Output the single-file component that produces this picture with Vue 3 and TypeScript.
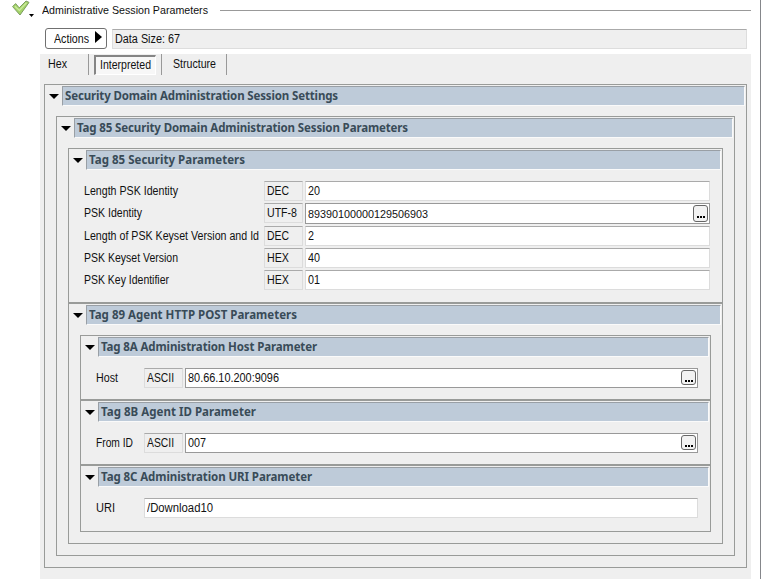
<script setup lang="ts">
import type { Directive } from 'vue'

interface Row {
  label: string
  labelWidth: number
  type: string
  typeWidth: number
  value: string
  valueWidth: number
  more?: boolean
}

interface Section {
  title: string
  titleWidth: number
  rows: Row[]
}

// Condenses a caption horizontally to its design width.
const vFit: Directive<HTMLElement, number> = {
  mounted: (el, binding) => {
    const natural = el.getBoundingClientRect().width
    if (!natural) return
    el.style.transform = `scaleX(${binding.value / natural})`
    el.style.marginRight = `${binding.value - natural}px`
  },
}

// Adjusts tracking so a heading takes up its design width.
const vTrack: Directive<HTMLElement, number> = {
  mounted: (el, binding) => {
    const natural = el.getBoundingClientRect().width
    const count = (el.textContent ?? '').length
    if (count) el.style.letterSpacing = `${(binding.value - natural) / count}px`
  },
}

const security: Row[] = [
  { label: 'Length PSK Identity', labelWidth: 94, type: 'DEC', typeWidth: 22, value: '20', valueWidth: 12 },
  { label: 'PSK Identity', labelWidth: 58, type: 'UTF-8', typeWidth: 30, value: '89390100000129506903', valueWidth: 120, more: true },
  { label: 'Length of PSK Keyset Version and Id', labelWidth: 175, type: 'DEC', typeWidth: 22, value: '2', valueWidth: 6 },
  { label: 'PSK Keyset Version', labelWidth: 94, type: 'HEX', typeWidth: 22, value: '40', valueWidth: 12 },
  { label: 'PSK Key Identifier', labelWidth: 85, type: 'HEX', typeWidth: 22, value: '01', valueWidth: 12 },
]

const agent: Section[] = [
  {
    title: 'Tag 8A Administration Host Parameter',
    titleWidth: 216,
    rows: [{ label: 'Host', labelWidth: 22, type: 'ASCII', typeWidth: 27, value: '80.66.10.200:9096', valueWidth: 91, more: true }],
  },
  {
    title: 'Tag 8B Agent ID Parameter',
    titleWidth: 155,
    rows: [{ label: 'From ID', labelWidth: 37, type: 'ASCII', typeWidth: 27, value: '007', valueWidth: 18, more: true }],
  },
  {
    title: 'Tag 8C Administration URI Parameter',
    titleWidth: 211,
    rows: [{ label: 'URI', labelWidth: 19, type: '', typeWidth: 0, value: '/Download10', valueWidth: 66 }],
  },
]
</script>

<template>
  <div class="window">
    <header class="heading">
      <svg class="check" width="24" height="18" viewBox="0 0 24 18">
        <path d="M.6 6.6 L3.6 3.6 L7.2 7.8 L14 1 L17 2.4 L8 15 Z" fill="#a5d468" stroke="#7c9c62" stroke-width="1" stroke-linejoin="round" />
        <path d="M3 6.2 L7.4 10.4 L14.4 2.8" fill="none" stroke="#cdeca2" stroke-width="1.2" />
        <path d="M17 14h5l-2.5 3z" fill="#000" />
      </svg>
      <span v-fit="166" class="text">Administrative Session Parameters</span>
      <i class="rule"></i>
    </header>

    <div class="toolbar">
      <button class="actions">
        <span v-fit="35" class="text">Actions</span>
        <svg width="7" height="12" viewBox="0 0 7 12"><path d="M0 0 L7 6 L0 12Z" /></svg>
      </button>
      <div class="status"><span v-fit="65" class="text">Data Size: 67</span></div>
    </div>

    <main class="panel">
      <nav class="tabs">
        <div class="tab hex"><span v-fit="19" class="text">Hex</span></div>
        <div class="tab active"><div class="pressed"><span v-fit="51" class="text">Interpreted</span></div></div>
        <div class="tab structure"><span v-fit="43" class="text">Structure</span></div>
      </nav>

      <section class="box root">
        <div class="bar">
          <svg class="arrow" width="10" height="5" viewBox="0 0 10 5"><path d="M0 0h10L5 5z" /></svg>
          <h2><span v-track="273">Security Domain Administration Session Settings</span></h2>
        </div>
        <section class="box">
          <div class="bar">
            <svg class="arrow" width="10" height="5" viewBox="0 0 10 5"><path d="M0 0h10L5 5z" /></svg>
            <h2><span v-track="331">Tag 85 Security Domain Administration Session Parameters</span></h2>
          </div>
          <section class="box">
            <div class="bar">
              <svg class="arrow" width="10" height="5" viewBox="0 0 10 5"><path d="M0 0h10L5 5z" /></svg>
              <h2><span v-track="156">Tag 85 Security Parameters</span></h2>
            </div>
            <div class="rows wide">
              <div v-for="row in security" :key="row.label" class="row" :class="{ editable: row.more }">
                <label><span v-fit="row.labelWidth" class="text">{{ row.label }}</span></label>
                <div class="type"><span v-fit="row.typeWidth" class="text">{{ row.type }}</span></div>
                <div class="value">
                  <span v-fit="row.valueWidth" class="text">{{ row.value }}</span>
                  <button v-if="row.more" class="more"><i></i><i></i><i></i></button>
                </div>
              </div>
            </div>
          </section>
          <section class="box">
            <div class="bar">
              <svg class="arrow" width="10" height="5" viewBox="0 0 10 5"><path d="M0 0h10L5 5z" /></svg>
              <h2><span v-track="208">Tag 89 Agent HTTP POST Parameters</span></h2>
            </div>
            <section v-for="item in agent" :key="item.title" class="box leaf">
              <div class="bar">
                <svg class="arrow" width="10" height="5" viewBox="0 0 10 5"><path d="M0 0h10L5 5z" /></svg>
                <h2><span v-track="item.titleWidth">{{ item.title }}</span></h2>
              </div>
              <div class="rows narrow">
                <div v-for="row in item.rows" :key="row.label" class="row" :class="{ editable: row.more }">
                  <label><span v-fit="row.labelWidth" class="text">{{ row.label }}</span></label>
                  <div v-if="row.type" class="type"><span v-fit="row.typeWidth" class="text">{{ row.type }}</span></div>
                  <div class="value">
                    <span v-fit="row.valueWidth" class="text">{{ row.value }}</span>
                    <button v-if="row.more" class="more"><i></i><i></i><i></i></button>
                  </div>
                </div>
              </div>
            </section>
          </section>
        </section>
      </section>
    </main>
  </div>
</template>

<style>
body {
  margin: 0;
  background: #fff;
  overflow: hidden;
}
</style>

<style scoped>
* {
  box-sizing: border-box;
}
.window {
  width: 761px;
  height: 579px;
  border-right: 1px solid #85878b;
  background: #fff;
  font: 12px/14px 'Liberation Sans', Arial, sans-serif;
  color: #111;
  display: flex;
  flex-direction: column;
  overflow: hidden;
}
.text {
  display: inline-block;
  white-space: nowrap;
  transform-origin: 0 50%;
}
button {
  font: inherit;
  color: inherit;
  margin: 0;
  padding: 0;
}
.heading {
  height: 28px;
  flex: none;
  display: flex;
  align-items: flex-start;
  padding-left: 12px;
}
.check {
  flex: none;
  margin-right: 6px;
}
.heading .text {
  flex: none;
  margin-top: 3px;
  font-size: 11px;
}
.rule {
  flex: 1;
  height: 1px;
  margin: 10px 9px 0 12px;
  background: #999;
}
.toolbar {
  height: 26px;
  flex: none;
  display: flex;
  align-items: flex-start;
  gap: 5px;
  padding: 0 13px 0 45px;
}
.actions {
  width: 62px;
  height: 21px;
  flex: none;
  display: flex;
  align-items: center;
  gap: 6px;
  padding-left: 8px;
  background: #fff;
  border: 1px solid #707070;
  border-radius: 3px;
}
.actions svg {
  flex: none;
  margin-top: -3px;
}
.status {
  flex: 1;
  height: 20px;
  margin-top: 1px;
  padding: 2px 0 0 2px;
  background: #efefef;
  border: 1px solid #ddd;
  border-top-color: #aaa;
}
.panel {
  flex: 1;
  margin: 0 9px 0 40px;
  background: #efefef;
}
.tabs {
  display: flex;
  height: 30px;
}
.tab {
  height: 21px;
  border-right: 1px solid #999;
}
.hex {
  width: 49px;
  padding: 3px 0 0 8px;
}
.active {
  width: 73px;
  padding: 1px 0 0 5px;
}
.pressed {
  width: 62px;
  height: 20px;
  padding: 1px 0 0 4px;
  border: 1px solid #fff;
  border-top: 2px solid #858585;
  border-left: 2px solid #858585;
  background: #f7f7f7;
}
.structure {
  width: 65px;
  padding: 3px 0 0 11px;
}
.box {
  border: 1px solid #999b99;
  padding: 1px 11px 11px;
}
.root {
  margin: 0 4px;
}
.bar {
  display: flex;
  align-items: center;
  height: 20px;
  margin: 0 -10px 10px -8px;
}
.arrow {
  flex: none;
  margin-right: 3px;
  margin-left: 1px;
}
.bar h2 {
  flex: 1;
  height: 20px;
  margin: 0;
  padding-left: 2px;
  background: #becbd9;
  border: 1px solid #fafafa;
  border-top-color: #999fa5;
  border-left-color: #999fa5;
  font: bold 11.5px/18px 'Noto Sans', Verdana, sans-serif;
  color: #394b58;
  white-space: nowrap;
}
.leaf:last-child {
  padding-bottom: 13px;
}
.rows {
  display: flex;
  flex-direction: column;
  gap: 2px;
}
.wide {
  padding: 1px 1px 1px 4px;
}
.narrow {
  padding: 1px 1px 0 4px;
}
.row {
  display: flex;
  height: 20px;
  gap: 2px;
}
.wide .row.editable {
  height: 21px;
}
.row label {
  flex: none;
  padding-top: 3px;
}
.wide label {
  width: 178px;
}
.narrow label {
  width: 46px;
}
.type {
  flex: none;
  width: 39px;
  height: 20px;
  padding: 2px 0 0 2px;
  border: 1px solid #dcdcdc;
  border-top-color: #aaa;
}
.value {
  flex: 1;
  display: flex;
  justify-content: space-between;
  align-items: flex-start;
  padding: 2px 0 0 2px;
  background: #fff;
  border: 1px solid #dcdcdc;
  border-top-color: #aaa;
}
.editable .value {
  border-color: #999;
}
.wide .editable .value {
  font-size: 11.5px;
  padding-top: 3px;
}
.more {
  flex: none;
  width: 15px;
  height: 15px;
  margin: -1px 1px 0 0;
  display: flex;
  align-items: flex-end;
  justify-content: center;
  gap: 1px;
  padding-bottom: 2px;
  background: #f2f2f2;
  border: 1px solid #666;
  border-radius: 3px;
}
.wide .more {
  height: 17px;
  margin-top: -2px;
  padding-bottom: 3px;
}
.more i {
  width: 2px;
  height: 2px;
  background: #000;
}
</style>
